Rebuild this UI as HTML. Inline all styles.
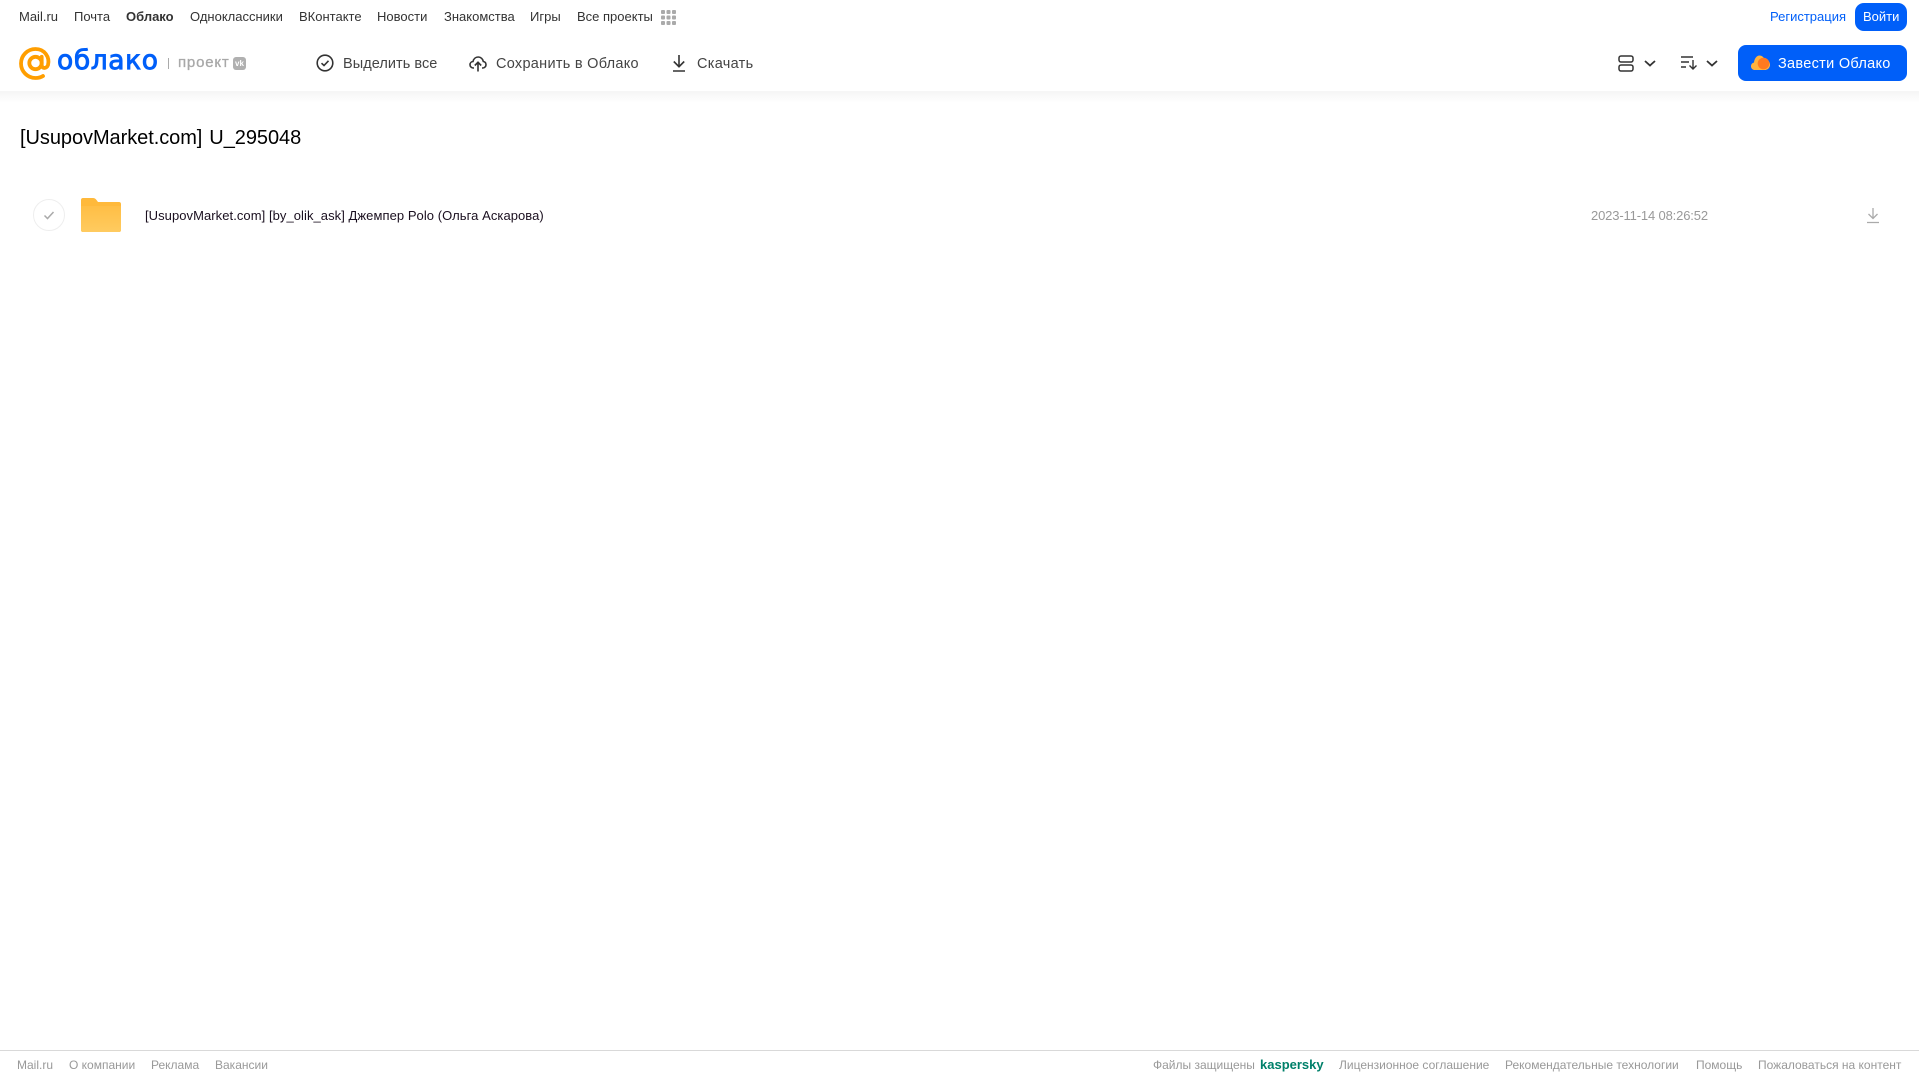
<!DOCTYPE html>
<html lang="ru"><head><meta charset="utf-8"><title>Облако</title>
<style>
html,body{margin:0;padding:0;background:#fff}
body{width:1919px;height:1079px;position:relative;overflow:hidden;font-family:"Liberation Sans",sans-serif}
.t{position:absolute;white-space:nowrap}
.n{top:9px;font-size:13px;line-height:16px;color:#333}
.a{top:55px;font-size:14.5px;line-height:18px;color:#444}
.f{top:1058px;font-size:12px;line-height:14px;color:#999}
svg{position:absolute;overflow:visible}
</style></head><body>
<div style="position:absolute;left:0;top:91px;width:1919px;height:12px;background:linear-gradient(#f5f5f5,#fff)"></div>
<span class="t n" style="left:19px">Mail.ru</span>
<span class="t n" style="left:74px">Почта</span>
<span class="t n" style="left:126px;font-weight:700">Облако</span>
<span class="t n" style="left:190px">Одноклассники</span>
<span class="t n" style="left:299px">ВКонтакте</span>
<span class="t n" style="left:377px">Новости</span>
<span class="t n" style="left:444px">Знакомства</span>
<span class="t n" style="left:530px">Игры</span>
<span class="t n" style="left:577px">Все проекты</span>
<svg style="left:661px;top:10px" width="15" height="15" fill="#aaa"><rect width="4" height="4" rx="1"/><rect x="5.500" width="4" height="4" rx="1"/><rect x="11" width="4" height="4" rx="1"/><rect y="5.500" width="4" height="4" rx="1"/><rect x="5.500" y="5.500" width="4" height="4" rx="1"/><rect x="11" y="5.500" width="4" height="4" rx="1"/><rect y="11" width="4" height="4" rx="1"/><rect x="5.500" y="11" width="4" height="4" rx="1"/><rect x="11" y="11" width="4" height="4" rx="1"/></svg>
<span class="t n" style="left:1770px;color:#005ff9">Регистрация</span>
<div style="position:absolute;left:1855px;top:3px;width:52px;height:28px;border-radius:9px;background:#005ff9"></div>
<span class="t n" style="left:1863px;color:#fff">Войти</span>
<svg style="left:19px;top:47px" width="33" height="33" viewBox="0 0 33 33" fill="none" stroke="#ff9e00" stroke-width="3.800"><circle cx="16.500" cy="16" r="6.200"/><path d="M22.700 9.800V18C22.700 21.800 27.500 22 29 18C31 10 25.500 2 16.500 2C8.500 2 2 8.500 2 16.500C2 24.500 8.500 31 16.500 31C19.500 31 22 30.300 24 29" stroke-linecap="round"/></svg>
<span class="t" style="left:57px;top:42px;font-size:26.500px;line-height:38px;color:#005ff9;letter-spacing:.6px;-webkit-text-stroke:.9px #005ff9;font-family:'DejaVu Sans',sans-serif">облако</span>
<div style="position:absolute;left:168px;top:58px;width:1px;height:11px;background:#aaa"></div>
<span class="t" style="left:178px;top:54px;font-size:15px;line-height:18px;color:#a8a8a8;letter-spacing:.8px;-webkit-text-stroke:.3px #a8a8a8">проект</span>
<div style="position:absolute;left:233px;top:57px;width:13px;height:13px;border-radius:3px;background:#b0b0b0;color:#fff;font-size:8px;line-height:13px;text-align:center;font-weight:700">vk</div>
<svg style="left:316px;top:54px" width="18" height="18" viewBox="0 0 18 18" fill="none" stroke="#333" stroke-width="1.600"><circle cx="9" cy="9" r="7.800"/><path d="M5.500 9.200L8 11.500L12.500 6.800"/></svg>
<span class="t a" style="left:343px;letter-spacing:.05px">Выделить все</span>
<svg style="left:469px;top:54px" width="18" height="18" viewBox="0 0 18 18" fill="none" stroke="#333" stroke-width="1.600"><path d="M5 14H4.500C2.500 14 1 12.500 1 10.700C1 9 2.300 7.600 4 7.500C4.600 4.800 6.700 3 9.200 3C11.800 3 13.900 5 14.300 7.500C15.900 7.800 17 9.100 17 10.700C17 12.500 15.500 14 13.500 14H13"/><path d="M9 17.500V8.500M5.800 11.500L9 8.300L12.200 11.500"/></svg>
<span class="t a" style="left:496px;letter-spacing:.28px">Сохранить в Облако</span>
<svg style="left:671px;top:54px" width="16" height="18" viewBox="0 0 16 18" fill="none" stroke="#333" stroke-width="1.600"><path d="M8 1V12.500M2.800 7.500L8 12.700L13.200 7.500M2 17H14"/></svg>
<span class="t a" style="left:697px;letter-spacing:.3px">Скачать</span>
<svg style="left:1618px;top:55px" width="16" height="17" viewBox="0 0 16 17" fill="none" stroke="#333" stroke-width="1.500"><rect x="1" y="1" width="14" height="6" rx="2"/><rect x="1" y="10" width="14" height="6" rx="2"/></svg>
<svg style="left:1644px;top:60px" width="12" height="7" viewBox="0 0 12 7" fill="none" stroke="#333" stroke-width="1.800"><path d="M1 1L6 5.500L11 1"/></svg>
<svg style="left:1681px;top:56px" width="16" height="14" viewBox="0 0 16 14" fill="none" stroke="#333" stroke-width="1.400"><path d="M0 1H12M0 6H8M0 11H5M12 4V13M8.500 9.500L12 13L15.500 9.500"/></svg>
<svg style="left:1706px;top:60px" width="12" height="7" viewBox="0 0 12 7" fill="none" stroke="#333" stroke-width="1.800"><path d="M1 1L6 5.500L11 1"/></svg>
<div style="position:absolute;left:1738px;top:45px;width:169px;height:36px;border-radius:8px;background:#005ff9"></div>
<svg style="left:1751px;top:55px" width="19" height="16" viewBox="0 0 19 16"><path d="M4 15C1.500 15 0 13.200 0 11.200C0 9.300 1.300 7.900 3 7.500C3.400 3.500 5.800 .5 8.500 .5C10.800 .5 12.500 2 13.500 4C16.500 4 19 6.500 19 9.700C19 12.800 16.500 15 13.500 15Z" fill="#ffb33f"/><circle cx="12.500" cy="8.500" r="5.800" fill="#ff7a1f"/></svg>
<span class="t" style="left:1778px;top:55px;font-size:14.500px;line-height:18px;color:#fff;letter-spacing:.3px">Завести Облако</span>
<span class="t" style="left:20px;top:125px;font-size:20px;line-height:26px;color:#000;word-spacing:1.500px;letter-spacing:-.06px">[UsupovMarket.com] U_295048</span>
<svg style="left:33px;top:199px" width="32" height="32" viewBox="0 0 32 32" fill="none"><circle cx="16" cy="16" r="15.500" stroke="#eee"/><path d="M11.500 16.500L14.500 19.500L20.500 13" stroke="#aaa" stroke-width="1.500"/></svg>
<svg style="left:81px;top:198px" width="40" height="34" viewBox="0 0 40 34"><defs><linearGradient id="g" x1="0" y1="0" x2="0" y2="1"><stop offset="0" stop-color="#ffbe45"/><stop offset="1" stop-color="#ffcb60"/></linearGradient></defs><path d="M2 0H12C13.500 0 14.500 .6 15.500 2L17 4H38C39.200 4 40 4.800 40 6V32C40 33.200 39.200 34 38 34H2C.8 34 0 33.200 0 32V2C0 .8 .8 0 2 0Z" fill="#ffb93b"/><path d="M0 8H40V32C40 33.200 39.200 34 38 34H2C.8 34 0 33.200 0 32Z" fill="url(#g)"/></svg>
<span class="t" style="left:145px;top:208px;font-size:13px;line-height:16px;color:#1a0f1f;letter-spacing:.06px">[UsupovMarket.com] [by_olik_ask] Джемпер Polo (Ольга Аскарова)</span>
<span class="t" style="left:1591px;top:208px;font-size:13px;line-height:16px;color:#999;letter-spacing:-.15px">2023-11-14 08:26:52</span>
<svg style="left:1866px;top:207px" width="14" height="17" viewBox="0 0 14 17" fill="none" stroke="#aaa" stroke-width="1.300"><path d="M7 1V11.500M2.500 7L7 11.500L11.500 7M1 15.500H13"/></svg>
<div style="position:absolute;left:0;top:1050px;width:1919px;height:1px;background:#d9d9d9"></div>
<span class="t f" style="left:17px">Mail.ru</span>
<span class="t f" style="left:69px">О компании</span>
<span class="t f" style="left:151px">Реклама</span>
<span class="t f" style="left:215px">Вакансии</span>
<span class="t f" style="left:1153px">Файлы защищены</span>
<span class="t f" style="left:1260px;top:1058px;font-size:13px;color:#00806a;font-weight:700">kaspersky</span>
<span class="t f" style="left:1339px">Лицензионное соглашение</span>
<span class="t f" style="left:1505px">Рекомендательные технологии</span>
<span class="t f" style="left:1696px">Помощь</span>
<span class="t f" style="left:1758px">Пожаловаться на контент</span>
</body></html>
